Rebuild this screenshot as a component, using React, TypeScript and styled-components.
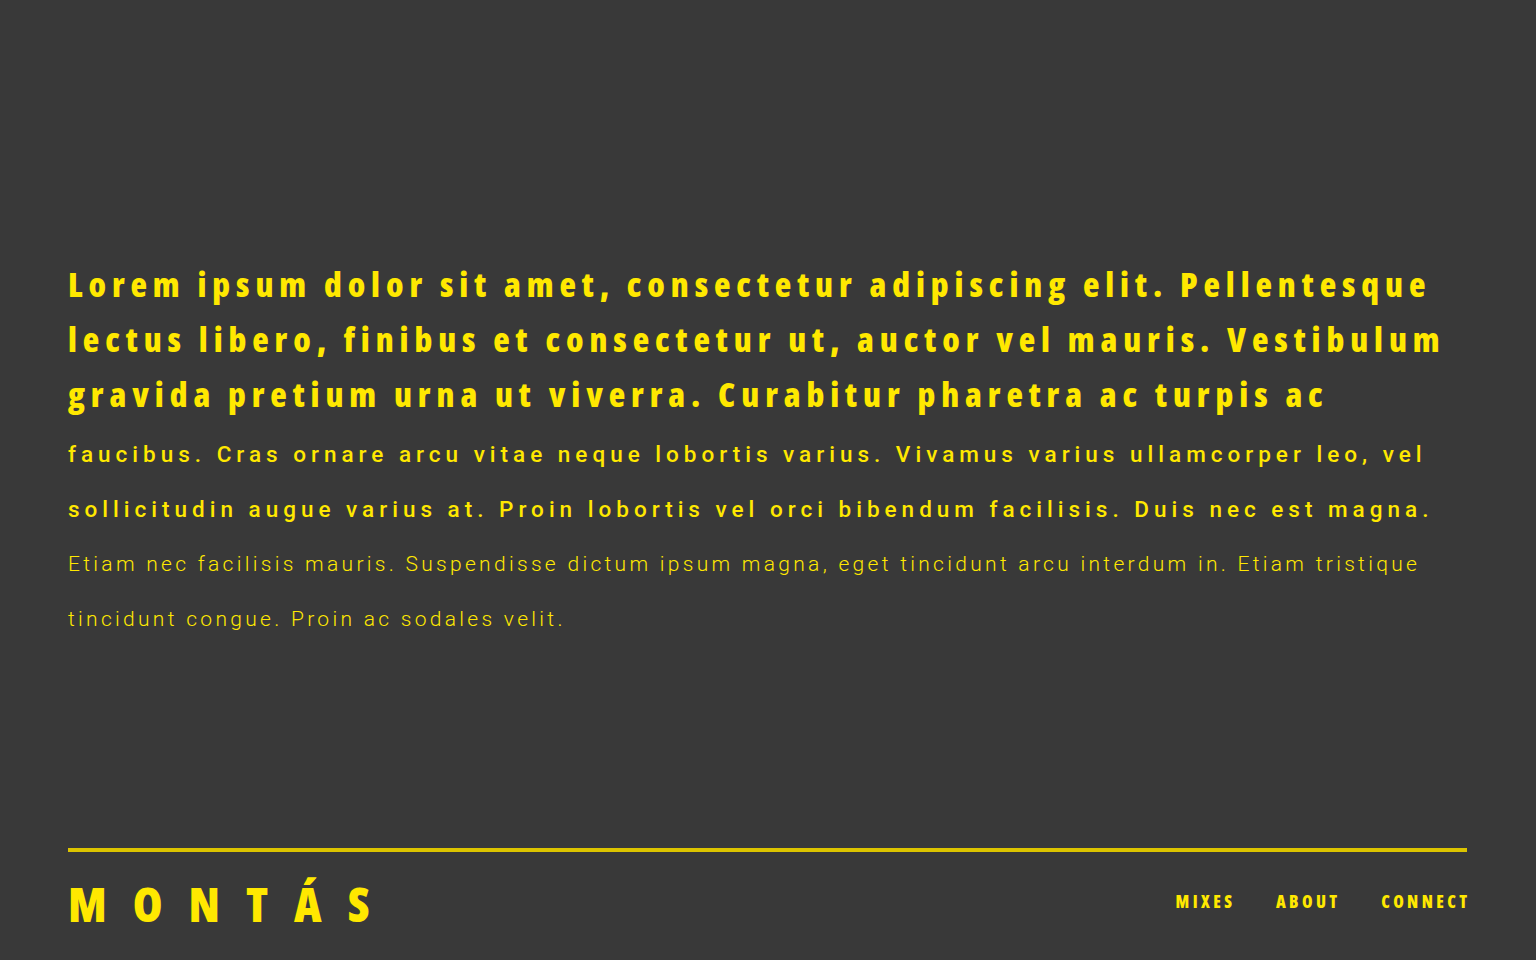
import styled, { createGlobalStyle } from "styled-components"

const GlobalStyle = createGlobalStyle`
    html, body {
        margin: 0;
        padding: 0;
        background: #393939;
    }
    * {
        box-sizing: border-box;
    }
`

const yellow = '#ffe800'
const condensed = `"Open Sans", "DejaVu Sans", sans-serif`
const regular = `Roboto, "Liberation Sans", Arial, sans-serif`

const Page = styled.div`
    min-height: 100vh;
    display: flex;
    flex-direction: column;
    padding: 0 69px 0 68px;
    color: ${yellow};
`
const Main = styled.main`
    flex: 1;
    display: flex;
    flex-direction: column;
    justify-content: center;
    padding-top: 56px;
`
const Lead = styled.p`
    margin: 0;
    line-height: 55px;
    font-family: ${condensed};
    font-stretch: 75%;
    font-size: 34px;
    font-weight: 800;
    letter-spacing: 5.9px;
`
const Body = styled.div`
    margin-top: 5px;
`
const Text = styled.p<{ $light?: boolean }>`
    margin: 0;
    line-height: 55px;
    font-family: ${regular};
    font-size: ${(p) => (p.$light ? '21px' : '22.5px')};
    font-weight: ${(p) => (p.$light ? 300 : 500)};
    letter-spacing: ${(p) => (p.$light ? '3.3px' : '5px')};
`
const Footer = styled.footer`
    border-top: 4px solid #dcc400;
    height: 112px;
    display: flex;
    align-items: center;
    justify-content: space-between;
    padding-bottom: 5px;
`
const Logo = styled.div`
    font-family: ${condensed};
    font-stretch: 75%;
    font-weight: 800;
    font-size: 48px;
    letter-spacing: 26px;
`
const Nav = styled.nav`
    display: flex;
    gap: 44px;
    margin-bottom: 5px;
`
const NavLink = styled.a`
    font-family: ${condensed};
    font-stretch: 75%;
    font-weight: 800;
    font-size: 17px;
    letter-spacing: 0.2em;
    margin-right: -0.2em;
    color: ${yellow};
    text-decoration: none;
`

export default function App() {
    return <>
        <GlobalStyle />
        <Page>
            <Main>
                <Lead>Lorem ipsum dolor sit amet, consectetur adipiscing elit. Pellentesque lectus libero, finibus et consectetur ut, auctor vel mauris. Vestibulum gravida pretium urna ut viverra. Curabitur pharetra ac turpis ac</Lead>
                <Body>
                    <Text>faucibus. Cras ornare arcu vitae neque lobortis varius. Vivamus varius ullamcorper leo, vel sollicitudin augue varius at. Proin lobortis vel orci bibendum facilisis. Duis nec est magna.</Text>
                    <Text $light>Etiam nec facilisis mauris. Suspendisse dictum ipsum magna, eget tincidunt arcu interdum in. Etiam tristique tincidunt congue. Proin ac sodales velit.</Text>
                </Body>
            </Main>
            <Footer>
                <Logo>MONTÁS</Logo>
                <Nav>
                    <NavLink href="#">MIXES</NavLink>
                    <NavLink href="#">ABOUT</NavLink>
                    <NavLink href="#">CONNECT</NavLink>
                </Nav>
            </Footer>
        </Page>
    </>
}
